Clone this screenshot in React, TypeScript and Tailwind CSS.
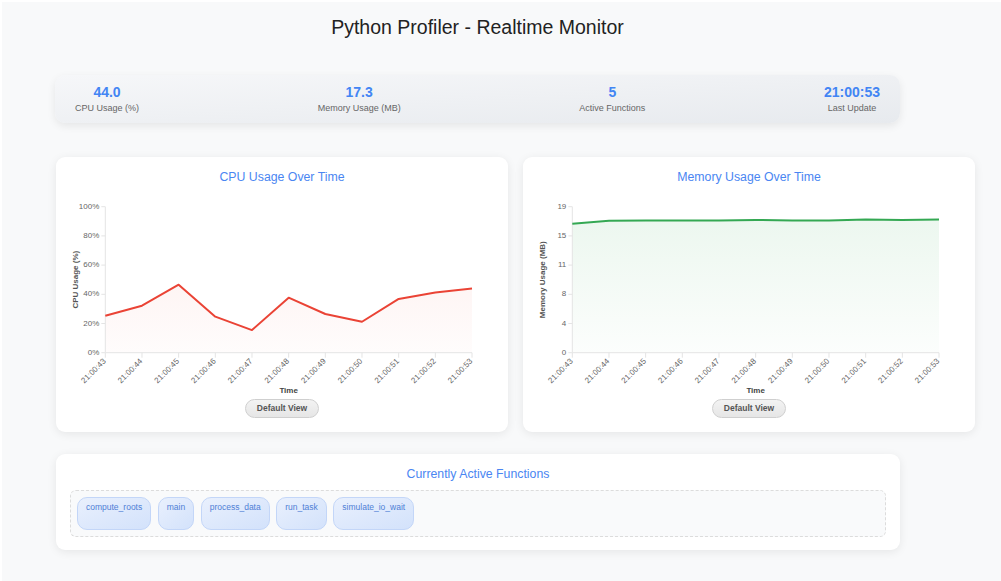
import React from "react";

const times = [
  "21:00:43",
  "21:00:44",
  "21:00:45",
  "21:00:46",
  "21:00:47",
  "21:00:48",
  "21:00:49",
  "21:00:50",
  "21:00:51",
  "21:00:52",
  "21:00:53",
];

const cpuData = [25.3, 32.2, 46.6, 24.7, 15.5, 37.7, 26.5, 21.2, 36.8, 41.3, 44.0];
const memData = [16.79, 17.18, 17.22, 17.2, 17.2, 17.27, 17.2, 17.2, 17.35, 17.27, 17.33];

type ChartProps = {
  id: string;
  data: number[];
  yMax: number;
  yTicks: string[];
  color: string;
  fill: string;
  yTitle: string;
};

function LineChart({ id, data, yMax, yTicks, color, fill, yTitle }: ChartProps) {
  const left = 49.3;
  const right = 416;
  const top = 21.7;
  const bottom = 167.7;
  const step = (right - left) / (data.length - 1);
  const px = (i: number) => left + i * step;
  const py = (v: number) => bottom - (v / yMax) * (bottom - top);
  const line = data.map((v, i) => `${i === 0 ? "M" : "L"}${px(i).toFixed(2)},${py(v).toFixed(2)}`).join(" ");
  const area = `${line} L${right},${bottom} L${left},${bottom} Z`;
  const font = "'Liberation Sans', Arial, sans-serif";
  return (
    <svg width="452" height="212" viewBox="0 0 452 212" className="block">
      <defs>
        <linearGradient id={id} x1="0" y1={top} x2="0" y2={bottom} gradientUnits="userSpaceOnUse">
          <stop offset="0" stopColor={fill} stopOpacity="0.1" />
          <stop offset="1" stopColor={fill} stopOpacity="0.015" />
        </linearGradient>
      </defs>
      <path d={area} fill={`url(#${id})`} />
      <line x1={left} y1={top} x2={left} y2={bottom} stroke="#e4e4e4" strokeWidth="1" />
      <line x1={left} y1={bottom} x2={right} y2={bottom} stroke="#e4e4e4" strokeWidth="1" />
      {yTicks.map((t, i) => {
        const y = bottom - (i / (yTicks.length - 1)) * (bottom - top);
        return (
          <g key={t + i}>
            <line x1={left - 4} y1={y} x2={left} y2={y} stroke="#e4e4e4" strokeWidth="1" />
            <text
              x={left - 6}
              y={y}
              textAnchor="end"
              dominantBaseline="middle"
              fontSize="8"
              fill="#666"
              fontFamily={font}
            >
              {t}
            </text>
          </g>
        );
      })}
      {times.map((t, i) => (
        <g key={t}>
          <line x1={px(i)} y1={bottom} x2={px(i)} y2={bottom + 5} stroke="#e4e4e4" strokeWidth="1" />
          <text
            transform={`translate(${px(i) + 1},${bottom + 9}) rotate(-45)`}
            textAnchor="end"
            fontSize="8"
            fill="#666"
            fontFamily={font}
          >
            {t}
          </text>
        </g>
      ))}
      <path d={line} fill="none" stroke={color} strokeWidth="2" strokeLinejoin="round" />
      <text
        x={(left + right) / 2}
        y={208}
        textAnchor="middle"
        fontSize="8"
        fontWeight="bold"
        fill="#444"
        fontFamily={font}
      >
        Time
      </text>
      <text
        transform={`translate(22,${(top + bottom) / 2}) rotate(-90)`}
        textAnchor="middle"
        fontSize="8"
        fontWeight="bold"
        fill="#555"
        fontFamily={font}
      >
        {yTitle}
      </text>
    </svg>
  );
}

function ChartCard(props: ChartProps & { title: string }) {
  return (
    <div className="flex flex-col items-center bg-white rounded-[9px] shadow-[0_2px_10px_rgba(0,0,0,0.08)] pt-[12px] pb-[14px] overflow-hidden">
      <div className="text-[12.3px] leading-[16px] text-[#4a86f2]">{props.title}</div>
      <div className="self-start">
        <LineChart {...props} />
      </div>
      <button className="mt-[2px] h-[19px] px-[11px] rounded-full border border-[#cfcfcf] bg-gradient-to-b from-[#f3f3f3] to-[#e6e6e6] text-[8.5px] font-bold text-[#555] leading-none">
        Default View
      </button>
    </div>
  );
}

function Stat({ value, label }: { value: string; label: string }) {
  return (
    <div className="flex flex-col items-center">
      <div className="text-[14px] leading-[17px] font-bold text-[#4285f4]">{value}</div>
      <div className="mt-[1px] text-[9px] leading-[12px] text-[#666]">{label}</div>
    </div>
  );
}

export default function App() {
  const fns = ["compute_roots", "main", "process_data", "run_task", "simulate_io_wait"];
  return (
    <div
      className="w-[1001px] h-[581px] bg-[#f8f9fa] overflow-hidden border-t-2 border-l-2 border-white"
      style={{ fontFamily: "'Liberation Sans', Arial, sans-serif" }}
    >
      <div className="pl-[53px]">
        <div className="w-[845px] flex flex-col">
          <h1 className="text-center text-[19.5px] leading-[24px] text-[#222] pt-[13px]">
            Python Profiler - Realtime Monitor
          </h1>
          <div className="mt-[36px] flex justify-between px-[20px] pt-[9px] pb-[9px] rounded-[10px] bg-gradient-to-br from-[#f6f7f9] to-[#e7eaee] shadow-[0_3px_8px_rgba(0,0,0,0.08)]">
            <Stat value="44.0" label="CPU Usage (%)" />
            <Stat value="17.3" label="Memory Usage (MB)" />
            <Stat value="5" label="Active Functions" />
            <Stat value="21:00:53" label="Last Update" />
          </div>
          <div className="mt-[34px] w-[919px] ml-[1px] grid grid-cols-2 gap-x-[15px]">
            <ChartCard
              id="cpuFill"
              title="CPU Usage Over Time"
              data={cpuData}
              yMax={100}
              yTicks={["0%", "20%", "40%", "60%", "80%", "100%"]}
              color="#ea4335"
              fill="#ea4335"
              yTitle="CPU Usage (%)"
            />
            <ChartCard
              id="memFill"
              title="Memory Usage Over Time"
              data={memData}
              yMax={19}
              yTicks={["0", "4", "8", "11", "15", "19"]}
              color="#34a853"
              fill="#34a853"
              yTitle="Memory Usage (MB)"
            />
          </div>
          <div className="mt-[22px] ml-[1px] w-[844px] bg-white rounded-[9px] shadow-[0_2px_10px_rgba(0,0,0,0.08)] pt-[12px] pb-[13px] px-[14px]">
            <div className="text-center text-[12.3px] leading-[16px] text-[#4a86f2]">Currently Active Functions</div>
            <div className="mt-[8px] border border-dashed border-[#dcdcdc] rounded-[6px] bg-[#f9fafb] p-[6px] flex gap-[6.5px]">
              {fns.map((f) => (
                <div
                  key={f}
                  className="h-[33px] px-[8px] pt-[4px] rounded-[10px] border border-[#c3d6f8] bg-gradient-to-br from-[#e9f0fd] to-[#d3e2fb] text-[8.5px] leading-[11px] text-[#4f7fd6]"
                >
                  {f}
                </div>
              ))}
            </div>
          </div>
        </div>
      </div>
    </div>
  );
}
